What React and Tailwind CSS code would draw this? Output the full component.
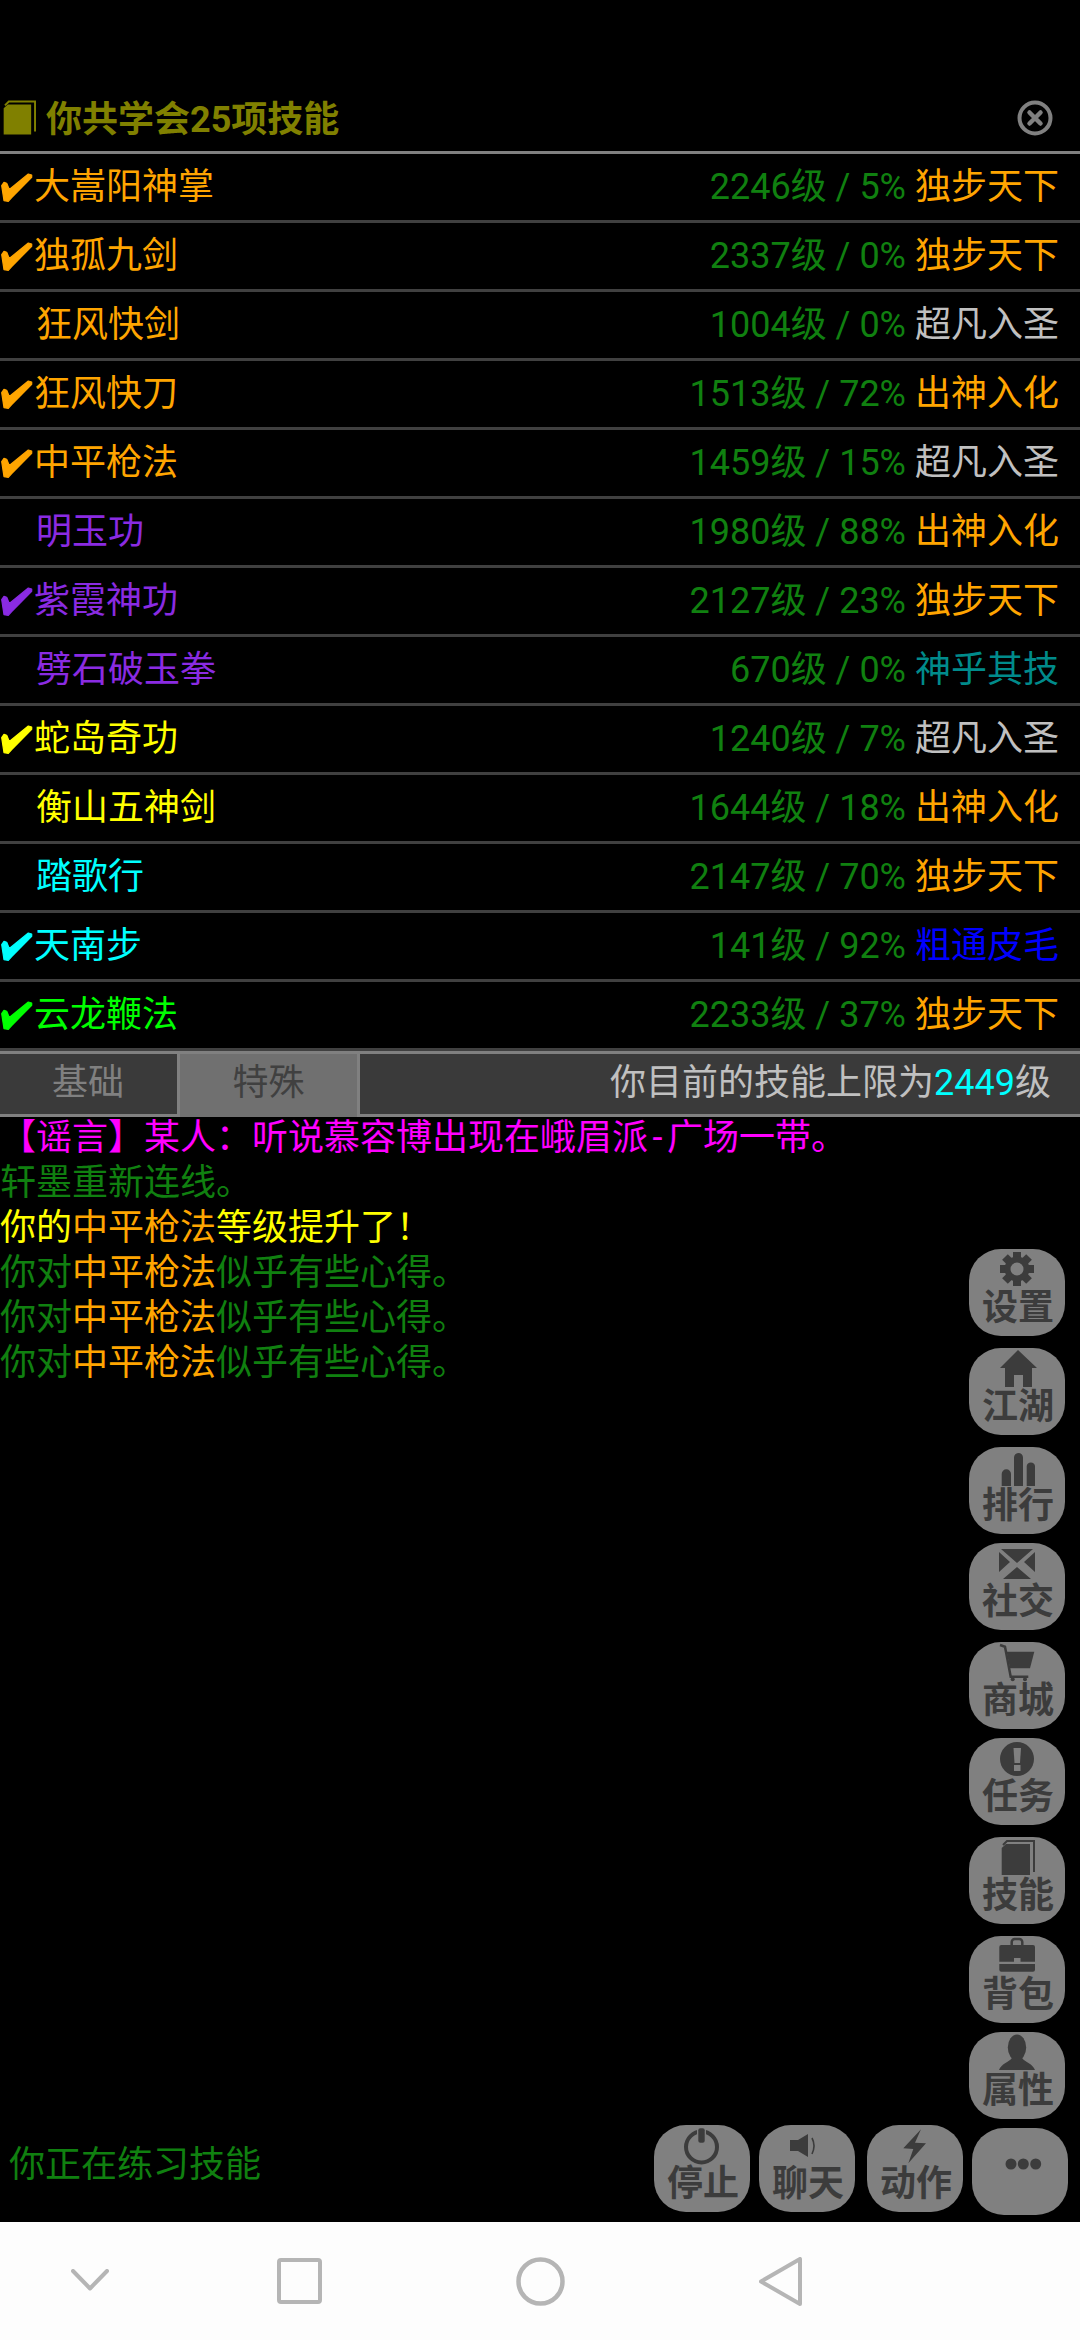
import React from "react";

const ORANGE = "text-[#ffa500]";
const GREY = "text-[#c0c0c0]";
const PURPLE = "text-[#8a2be2]";
const YELLOW = "text-[#ffff00]";
const CYAN = "text-[#00ffff]";
const LIME = "text-[#00ff00]";
const TEAL = "text-[#008b8b]";
const BLUE = "text-[#0000ff]";

const skills = [
  ["大嵩阳神掌", ORANGE, true, "2246级 / 5%", "独步天下", ORANGE],
  ["独孤九剑", ORANGE, true, "2337级 / 0%", "独步天下", ORANGE],
  ["狂风快剑", ORANGE, false, "1004级 / 0%", "超凡入圣", GREY],
  ["狂风快刀", ORANGE, true, "1513级 / 72%", "出神入化", ORANGE],
  ["中平枪法", ORANGE, true, "1459级 / 15%", "超凡入圣", GREY],
  ["明玉功", PURPLE, false, "1980级 / 88%", "出神入化", ORANGE],
  ["紫霞神功", PURPLE, true, "2127级 / 23%", "独步天下", ORANGE],
  ["劈石破玉拳", PURPLE, false, "670级 / 0%", "神乎其技", TEAL],
  ["蛇岛奇功", YELLOW, true, "1240级 / 7%", "超凡入圣", GREY],
  ["衡山五神剑", YELLOW, false, "1644级 / 18%", "出神入化", ORANGE],
  ["踏歌行", CYAN, false, "2147级 / 70%", "独步天下", ORANGE],
  ["天南步", CYAN, true, "141级 / 92%", "粗通皮毛", BLUE],
  ["云龙鞭法", LIME, true, "2233级 / 37%", "独步天下", ORANGE],
];

const D = "#3c3c3c";
const B = "#808080";

const Svg = ({ children }) => (
  <svg width="40" height="37" viewBox="0 0 40 37" className="block shrink-0 overflow-visible">
    {children}
  </svg>
);

const BookShape = ({ fill }) => (
  <>
    <path d="M4.7 9 L9 5 H33 V36 H4.7Z" fill={fill} />
    <path d="M6 6 L10 2 H37 V33" fill="none" stroke={fill} strokeWidth="2" />
  </>
);

const icons = {
  gear: (
    <Svg>
      {[0, 45, 90, 135, 180, 225, 270, 315].map((a) => (
        <rect key={a} x="16" y="1" width="8" height="8" fill={D} transform={`rotate(${a} 20 18)`} />
      ))}
      <circle cx="20" cy="18" r="12.5" fill={D} />
      <circle cx="20" cy="18" r="6.5" fill={B} />
    </Svg>
  ),
  home: (
    <Svg>
      <path d="M21 0 L40 18 H35 V37 H26 V25 H17 V37 H8 V18 H3Z" fill={D} />
    </Svg>
  ),
  chart: (
    <Svg>
      <path d="M4.7 37 V25 a4.6 4.6 0 0 1 9.3 0 V37Z" fill={D} />
      <path d="M17 37 V8.5 a4.5 4.5 0 0 1 9 0 V37Z" fill={D} />
      <path d="M29.7 37 V17 a4.2 4.2 0 0 1 8.3 0 V37Z" fill={D} />
    </Svg>
  ),
  mail: (
    <Svg>
      <path d="M4 4 H36 L20 18Z M2 7 L13 17 L2 27Z M38 7 L27 17 L38 27Z M6 34 L20 22 L34 34Z" fill={D} />
    </Svg>
  ),
  cart: (
    <Svg>
      <path d="M3 1 L8 2.7 L13.7 32.7 H31.3" fill="none" stroke={D} strokeWidth="2.5" />
      <path d="M9.7 7.7 H37.3 L33 24.3 H13Z" fill={D} />
      <circle cx="15.7" cy="35.3" r="2" fill={D} />
      <circle cx="28" cy="35.3" r="2" fill={D} />
    </Svg>
  ),
  alert: (
    <Svg>
      <circle cx="20" cy="19" r="17" fill={D} />
      <path d="M16.5 8 H24 L23 23 H17.5Z" fill={B} />
      <rect x="17" y="25" width="6.5" height="6" fill={B} />
    </Svg>
  ),
  book: (
    <Svg>
      <BookShape fill={D} />
    </Svg>
  ),
  bag: (
    <Svg>
      <path d="M14.7 7 V4 a3 3 0 0 1 3 -3 H22.3 a3 3 0 0 1 3 3 V7" fill="none" stroke={D} strokeWidth="2.5" />
      <path d="M4.3 7 H36 a2 2 0 0 1 2 2 V23.7 H23.5 V20 H17 V23.7 H2.3 V9 a2 2 0 0 1 2 -2Z" fill={D} />
      <path d="M2.3 26 H38 V31.7 a2 2 0 0 1 -2 2 H4.3 a2 2 0 0 1 -2 -2Z" fill={D} />
    </Svg>
  ),
  person: (
    <Svg>
      <ellipse cx="20" cy="13.5" rx="9.2" ry="13" fill={D} />
      <path d="M2 36 C4 30 12 28 15 24 H25 C28 28 36 30 38 36Z" fill={D} />
    </Svg>
  ),
  power: (
    <Svg>
      <circle cx="19.5" cy="20" r="15.5" fill="none" stroke={D} strokeWidth="4" />
      <rect x="15" y="0.5" width="9" height="16" fill={B} />
      <rect x="16.3" y="1.3" width="6.4" height="14.5" rx="2" fill={D} />
    </Svg>
  ),
  speaker: (
    <Svg>
      <path d="M3 13 H11 L21 7 V30 L11 24 H3Z" fill={D} />
      <path d="M25 11 Q29 18.5 25 27" fill="none" stroke={D} strokeWidth="1.6" />
    </Svg>
  ),
  bolt: (
    <Svg>
      <path d="M26 2.3 L8.3 21.3 L18.3 22 L13.3 36.3 L31 16.3 L20 15.7Z" fill={D} />
    </Svg>
  ),
  dots: (
    <Svg>
      <circle cx="11" cy="34" r="5.5" fill={D} />
      <circle cx="23.3" cy="34" r="5.5" fill={D} />
      <circle cx="35.7" cy="34" r="5.5" fill={D} />
    </Svg>
  ),
};

const Btn = ({ icon, label, className = "" }) => (
  <div
    className={`flex h-[87px] w-[96px] shrink-0 flex-col items-center rounded-[32px] bg-[#808080] pt-[2px] text-[36px] leading-[36px] font-bold text-[#3c3c3c] ${className}`}
  >
    {icons[icon]}
    <span className="mt-[2px] pl-[2px]">{label}</span>
  </div>
);

const Check = ({ fill }) => (
  <svg width="34" height="30" viewBox="0 9 34 30" className="mt-[1px] block">
    <path
      d="M1.7 21.7 L4 18.3 L6.7 19.3 L9.3 25.5 L28.3 10 L31.7 11 L31.7 13.3 L11.7 33.5 L8.3 37.3 L4 36.7Z"
      fill={fill}
      stroke={fill}
      strokeWidth="1.2"
      strokeLinejoin="round"
    />
  </svg>
);

const checkFill = {
  [ORANGE]: "#ffa500",
  [PURPLE]: "#8a2be2",
  [YELLOW]: "#ffff00",
  [CYAN]: "#00ffff",
  [LIME]: "#00ff00",
};

const Row = ({ name, color, check, level, rank, rankColor }) => (
  <div className="flex h-[69px] items-center border-b-[3px] border-[#404040] text-[36px] leading-[44px]">
    <span className={`${check ? "w-[34px]" : "w-[36px]"} shrink-0`}>{check && <Check fill={checkFill[color]} />}</span>
    <span className={color}>{name}</span>
    <span className="ml-auto text-[#108010]">{level}</span>
    <span className={`ml-[9px] mr-[21px] ${rankColor}`}>{rank}</span>
  </div>
);

const G = ({ children }) => <span className="text-[#108010]">{children}</span>;
const O = ({ children }) => <span className="text-[#ffa500]">{children}</span>;

export default function App() {
  return (
    <div className="flex h-[2340px] w-[1080px] flex-col overflow-hidden bg-black font-[Roboto,'Noto_Sans_CJK_SC',sans-serif]">
      <header className="flex h-[154px] shrink-0 items-end border-b-[3px] border-[#808080] pb-[9px]">
        <svg width="33" height="37" viewBox="4 0 34 37" className="ml-[3px] mb-[6px] block">
          <BookShape fill="#808000" />
        </svg>
        <h1 className="ml-[10px] text-[36px] leading-[44px] font-bold text-[#808000]">你共学会25项技能</h1>
        <svg width="36" height="36" viewBox="0 0 36 36" className="ml-auto mr-[27px] mb-[6px] block">
          <circle cx="18" cy="18" r="15.5" fill="none" stroke="#808080" strokeWidth="4" />
          <path d="M12.5 12.5 L23.5 23.5 M23.5 12.5 L12.5 23.5" stroke="#808080" strokeWidth="4.5" strokeLinecap="round" />
        </svg>
      </header>

      {skills.map(([name, color, check, level, rank, rankColor]) => (
        <Row key={name} name={name} color={color} check={check} level={level} rank={rank} rankColor={rankColor} />
      ))}

      <div className="flex h-[66px] shrink-0 border-y-[3px] border-[#808080] bg-[#3a3a3a] text-[36px] leading-[58px]">
        <div className="w-[177px] pr-[1px] text-center text-[#808080]">基础</div>
        <div className="mb-[-3px] w-[183px] border-x-[3px] border-[#808080] bg-[#707070] text-center text-[#404040]">特殊</div>
        <div className="ml-auto mr-[29px] text-[#c0c0c0]">
          你目前的技能上限为<span className="text-[#00ffff]">2449</span>级
        </div>
      </div>

      <main className="relative flex-1 text-[36px] leading-[45px]">
        <div className="mt-[-1px] whitespace-nowrap text-[#ff00ff]">
          【谣言】某人：听说慕容博出现在峨眉派<span className="px-[4.5px]">-</span>广场一带。
        </div>
        <div><G>轩墨重新连线。</G></div>
        <div className="text-[#ffff00]">你的<O>中平枪法</O>等级提升了！</div>
        <div><G>你对</G><O>中平枪法</O><G>似乎有些心得。</G></div>
        <div><G>你对</G><O>中平枪法</O><G>似乎有些心得。</G></div>
        <div><G>你对</G><O>中平枪法</O><G>似乎有些心得。</G></div>

        <div className="absolute top-[132px] right-[15px] flex flex-col">
          <Btn icon="gear" label="设置" />
          <Btn icon="home" label="江湖" className="mt-[12px]" />
          <Btn icon="chart" label="排行" className="mt-[12px]" />
          <Btn icon="mail" label="社交" className="mt-[9px]" />
          <Btn icon="cart" label="商城" className="mt-[12px]" />
          <Btn icon="alert" label="任务" className="mt-[9px]" />
          <Btn icon="book" label="技能" className="mt-[12px]" />
          <Btn icon="bag" label="背包" className="mt-[12px]" />
          <Btn icon="person" label="属性" className="mt-[9px]" />
        </div>

        <div className="absolute right-[12px] bottom-[7px] left-0 flex items-start">
          <span className="mt-[18px] mr-auto ml-[9px] text-[#108010]">你正在练习技能</span>
          <Btn icon="power" label="停止" />
          <Btn icon="speaker" label="聊天" className="ml-[9px]" />
          <Btn icon="bolt" label="动作" className="ml-[12px]" />
          <Btn icon="dots" label="" className="mt-[3px] ml-[9px]" />
        </div>
      </main>

      <nav className="flex h-[118px] shrink-0 items-center bg-[#fdfdfd]">
        <svg width="38" height="22" viewBox="0 0 38 22" className="ml-[71px] mt-[-2px] block">
          <path d="M2 2 L19 19.5 L36 2" fill="none" stroke="#b5b5b5" strokeWidth="4" strokeLinecap="round" strokeLinejoin="round" />
        </svg>
        <svg width="45" height="46" viewBox="0 0 45 46" className="ml-[168px] block">
          <rect x="2" y="2" width="41" height="42" rx="2" fill="none" stroke="#b5b5b5" strokeWidth="4" />
        </svg>
        <svg width="49" height="49" viewBox="0 0 49 49" className="ml-[194px] block">
          <circle cx="24.5" cy="24.5" r="22" fill="none" stroke="#b5b5b5" strokeWidth="4.5" />
        </svg>
        <svg width="43" height="49" viewBox="0 0 43 49" className="ml-[194px] block">
          <path d="M41 2 V47 L2 24.5Z" fill="none" stroke="#b5b5b5" strokeWidth="4" strokeLinejoin="round" />
        </svg>
      </nav>
    </div>
  );
}
